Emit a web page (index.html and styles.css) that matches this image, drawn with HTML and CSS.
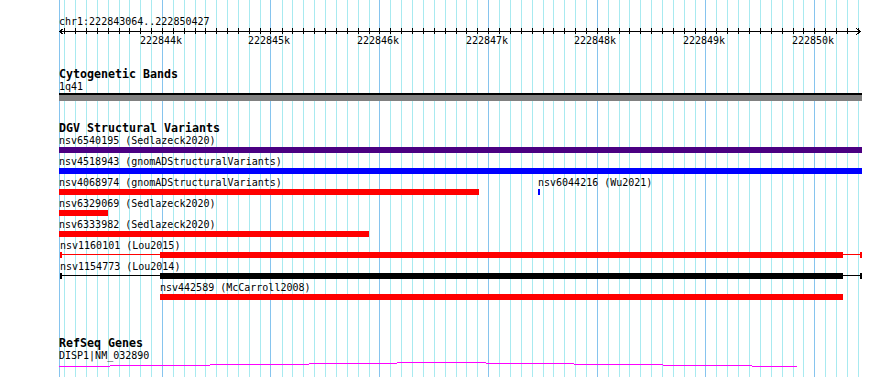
FILE: index.html
```html
<!DOCTYPE html>
<html lang="en">

<head>
    <meta charset="UTF-8" />
    <title>chr1:222843064..222850427</title>
    <link rel="stylesheet" href="styles.css">
</head>

<body>
    <div class="browser">
        <svg class="grid" width="890" height="377" viewBox="0 0 890 377">
            <path class="minor" d="M64.5 0V377M75.5 0V377M86.5 0V377M97.5 0V377M108.5 0V377M119.5 0V377M129.5 0V377M140.5 0V377M151.5 0V377M173.5 0V377M184.5 0V377M195.5 0V377M205.5 0V377M216.5 0V377M227.5 0V377M238.5 0V377M249.5 0V377M260.5 0V377M282.5 0V377M292.5 0V377M303.5 0V377M314.5 0V377M325.5 0V377M336.5 0V377M347.5 0V377M358.5 0V377M369.5 0V377M390.5 0V377M401.5 0V377M412.5 0V377M423.5 0V377M434.5 0V377M445.5 0V377M456.5 0V377M466.5 0V377M477.5 0V377M499.5 0V377M510.5 0V377M521.5 0V377M532.5 0V377M543.5 0V377M553.5 0V377M564.5 0V377M575.5 0V377M586.5 0V377M608.5 0V377M619.5 0V377M629.5 0V377M640.5 0V377M651.5 0V377M662.5 0V377M673.5 0V377M684.5 0V377M695.5 0V377M716.5 0V377M727.5 0V377M738.5 0V377M749.5 0V377M760.5 0V377M771.5 0V377M782.5 0V377M793.5 0V377M803.5 0V377M825.5 0V377M836.5 0V377M847.5 0V377M858.5 0V377" />
            <path class="major" d="M59.5 0V377M162.5 0V377M270.5 0V377M379.5 0V377M488.5 0V377M597.5 0V377M705.5 0V377M814.5 0V377" />
        </svg>

        <div class="ruler">
            <div class="location">chr1:222843064..222850427</div>
            <svg class="scale" width="890" height="9" viewBox="0 0 890 9">
                <path d="M60 4.5H861M63.5 1.5L59.5 4.5L63.5 7.5M856.5 1.5L860.5 4.5L856.5 7.5" />
                <path d="M64.5 1V7M75.5 1V7M86.5 1V7M97.5 1V7M108.5 1V7M119.5 1V7M129.5 1V7M140.5 1V7M151.5 1V7M162.5 1V7M173.5 1V7M184.5 1V7M195.5 1V7M205.5 1V7M216.5 1V7M227.5 1V7M238.5 1V7M249.5 1V7M260.5 1V7M270.5 1V7M282.5 1V7M292.5 1V7M303.5 1V7M314.5 1V7M325.5 1V7M336.5 1V7M347.5 1V7M358.5 1V7M369.5 1V7M379.5 1V7M390.5 1V7M401.5 1V7M412.5 1V7M423.5 1V7M434.5 1V7M445.5 1V7M456.5 1V7M466.5 1V7M477.5 1V7M488.5 1V7M499.5 1V7M510.5 1V7M521.5 1V7M532.5 1V7M543.5 1V7M553.5 1V7M564.5 1V7M575.5 1V7M586.5 1V7M597.5 1V7M608.5 1V7M619.5 1V7M629.5 1V7M640.5 1V7M651.5 1V7M662.5 1V7M673.5 1V7M684.5 1V7M695.5 1V7M705.5 1V7M716.5 1V7M727.5 1V7M738.5 1V7M749.5 1V7M760.5 1V7M771.5 1V7M782.5 1V7M793.5 1V7M803.5 1V7M814.5 1V7M825.5 1V7M836.5 1V7M847.5 1V7M858.5 1V7" />
            </svg>
            <div class="scale-labels">
                <span style="left:140px">222844k</span>
                <span style="left:248px">222845k</span>
                <span style="left:357px">222846k</span>
                <span style="left:466px">222847k</span>
                <span style="left:574px">222848k</span>
                <span style="left:683px">222849k</span>
                <span style="left:792px">222850k</span>
            </div>
        </div>

        <div class="track bands">
            <div class="track-title">Cytogenetic Bands</div>
            <div class="track-subtitle">1q41</div>
            <div class="band"></div>
        </div>

        <div class="track variants">
            <div class="track-title">DGV Structural Variants</div>
            <div class="rows">
                <div class="row">
                    <div class="feature" style="left:59px;width:803px">
                        <div class="feature-label">nsv6540195 (Sedlazeck2020)</div>
                        <div class="bar indigo"></div>
                    </div>
                </div>
                <div class="row">
                    <div class="feature" style="left:59px;width:803px">
                        <div class="feature-label">nsv4518943 (gnomADStructuralVariants)</div>
                        <div class="bar blue"></div>
                    </div>
                </div>
                <div class="row">
                    <div class="feature" style="left:59px;width:420px">
                        <div class="feature-label">nsv4068974 (gnomADStructuralVariants)</div>
                        <div class="bar red"></div>
                    </div>
                    <div class="feature" style="left:538px;width:2px">
                        <div class="feature-label">nsv6044216 (Wu2021)</div>
                        <div class="bar blue"></div>
                    </div>
                </div>
                <div class="row">
                    <div class="feature" style="left:59px;width:49px">
                        <div class="feature-label">nsv6329069 (Sedlazeck2020)</div>
                        <div class="bar red"></div>
                    </div>
                </div>
                <div class="row">
                    <div class="feature" style="left:59px;width:310px">
                        <div class="feature-label">nsv6333982 (Sedlazeck2020)</div>
                        <div class="bar red"></div>
                    </div>
                </div>
                <div class="row">
                    <div class="feature" style="left:60px;width:802px">
                        <div class="feature-label">nsv1160101 (Lou2015)</div>
                        <div class="bar split red">
                            <span class="thick" style="left:98px;width:683px"></span>
                        </div>
                    </div>
                </div>
                <div class="row">
                    <div class="feature" style="left:60px;width:802px">
                        <div class="feature-label">nsv1154773 (Lou2014)</div>
                        <div class="bar split black">
                            <span class="thick" style="left:98px;width:683px"></span>
                        </div>
                    </div>
                </div>
                <div class="row">
                    <div class="feature" style="left:160px;width:683px">
                        <div class="feature-label">nsv442589 (McCarroll2008)</div>
                        <div class="bar red"></div>
                    </div>
                </div>
            </div>
        </div>

        <div class="track genes">
            <div class="track-title">RefSeq Genes</div>
            <div class="track-subtitle">DISP1|NM_032890</div>
            <svg class="gene" width="890" height="5" viewBox="0 0 890 5">
                <path d="M59 4.5H110M110 3.5H210M210 2.5H309M309 1.5H397M397 0.5H486M486 1.5H574M574 2.5H663M663 3.5H752M752 4.5H797" />
            </svg>
        </div>
    </div>
</body>

</html>
```

FILE: styles.css
```css
* {
    margin: 0;
    padding: 0;
    box-sizing: border-box;
}

body {
    background: #fff;
}

.browser {
    position: relative;
    width: 890px;
    height: 377px;
    overflow: hidden;
    font-family: "DejaVu Sans Mono", monospace;
    font-size: 10px;
    line-height: 12px;
    color: #000;
}

/* grid lines sit behind all tracks */
.grid {
    position: absolute;
    top: 0;
    left: 0;
}

.grid path {
    fill: none;
    stroke-width: 1;
    shape-rendering: crispEdges;
}

.grid .minor {
    stroke: #a8eaf0;
}

.grid .major {
    stroke: #86c4ee;
}

.ruler,
.track {
    position: relative;
}

.ruler {
    padding-top: 16px;
}

.location,
.track-title,
.track-subtitle {
    padding-left: 59px;
    white-space: nowrap;
}

.location {
    line-height: 11px;
}

.scale {
    display: block;
}

.scale path {
    fill: none;
    stroke: #000;
    stroke-width: 1;
    shape-rendering: crispEdges;
}

.scale-labels {
    position: relative;
    height: 12px;
    margin-top: -1px;
}

.scale-labels span {
    position: absolute;
    top: 0;
}

.track-title {
    font-weight: bold;
    font-size: 11.63px;
    line-height: 14px;
}

.bands {
    margin-top: 20px;
}

.band {
    margin-left: 59px;
    width: 803px;
    height: 8px;
    border-top: 2px solid #000;
    background: #808080;
}

.variants {
    margin-top: 20px;
}

.rows {
    position: relative;
}

.row {
    position: relative;
    height: 21px;
}

.feature {
    position: absolute;
    top: 0;
}

.feature-label {
    white-space: nowrap;
}

.bar {
    position: relative;
    height: 6px;
    background: currentColor;
}

.indigo {
    color: #4b0082;
}

.blue {
    color: #0000ff;
}

.red {
    color: #ff0000;
}

.black {
    color: #000;
}

/* feature with thin outer span and thick core */
.bar.split {
    background: none;
    border-left: 2px solid currentColor;
    border-right: 2px solid currentColor;
}

.bar.split::before {
    content: "";
    position: absolute;
    left: 0;
    right: 0;
    top: 2px;
    height: 1px;
    background: currentColor;
}

.bar.split .thick {
    position: absolute;
    top: 0;
    height: 6px;
    background: currentColor;
}

.genes {
    margin-top: 33px;
}

.gene {
    display: block;
}

.gene path {
    fill: none;
    stroke: #ff00ff;
    stroke-width: 1;
    shape-rendering: crispEdges;
}
```
